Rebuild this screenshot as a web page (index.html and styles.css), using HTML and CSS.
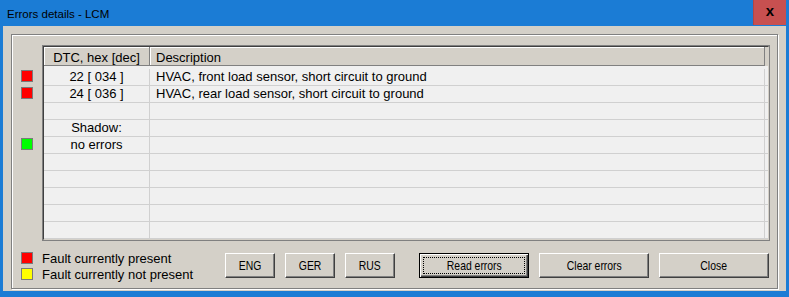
FILE: index.html
```html
<!DOCTYPE html>
<html lang="en">
<head>
  <meta charset="UTF-8">
  <title>Errors details - LCM</title>
  <link rel="stylesheet" href="styles.css">
</head>
<body>

  <div class="window">
    <!-- Title bar -->
    <div class="titlebar">
      <span class="title">Errors details - LCM</span>
      <div class="close-x">x</div>
    </div>

    <div class="client">
      <div class="group">

        <!-- Markers + error grid -->
        <div class="table-area">
          <div class="markers">
            <div class="mark-cell"><span class="led red"></span></div>
            <div class="mark-cell"><span class="led red"></span></div>
            <div class="mark-cell"></div>
            <div class="mark-cell"></div>
            <div class="mark-cell"><span class="led green"></span></div>
            <div class="mark-cell"></div>
            <div class="mark-cell"></div>
            <div class="mark-cell"></div>
            <div class="mark-cell"></div>
            <div class="mark-cell"></div>
          </div>

          <div class="grid">
            <div class="grid-inner">
              <div class="grid-head">
                <div class="hcell c1">DTC, hex [dec]</div>
                <div class="hcell c2">Description</div>
              </div>
              <div class="grid-body">
                <div class="row"><div class="cell c1">22 [ 034 ]</div><div class="cell c2">HVAC, front load sensor, short circuit to ground</div></div>
                <div class="row"><div class="cell c1">24 [ 036 ]</div><div class="cell c2">HVAC, rear load sensor, short circuit to ground</div></div>
                <div class="row"><div class="cell c1"></div><div class="cell c2"></div></div>
                <div class="row"><div class="cell c1">Shadow:</div><div class="cell c2"></div></div>
                <div class="row"><div class="cell c1">no errors</div><div class="cell c2"></div></div>
                <div class="row"><div class="cell c1"></div><div class="cell c2"></div></div>
                <div class="row"><div class="cell c1"></div><div class="cell c2"></div></div>
                <div class="row"><div class="cell c1"></div><div class="cell c2"></div></div>
                <div class="row"><div class="cell c1"></div><div class="cell c2"></div></div>
                <div class="row"><div class="cell c1"></div><div class="cell c2"></div></div>
              </div>
            </div>
          </div>
        </div>

        <!-- Legend + buttons -->
        <div class="footer">
          <div class="legend">
            <div class="legend-item"><span class="led red"></span>Fault currently present</div>
            <div class="legend-item"><span class="led yellow"></span>Fault currently not present</div>
          </div>
          <div class="lang">
            <button class="btn small"><span class="label">ENG</span></button>
            <button class="btn small"><span class="label">GER</span></button>
            <button class="btn small"><span class="label">RUS</span></button>
          </div>
          <div class="actions">
            <button class="btn wide default"><span class="label">Read errors</span></button>
            <button class="btn wide"><span class="label">Clear errors</span></button>
            <button class="btn wide"><span class="label">Close</span></button>
          </div>
        </div>

      </div>
    </div>
  </div>

</body>
</html>
```

FILE: styles.css
```css
/* General */
body {
  margin: 0;
  font-family: "Liberation Sans", Arial, sans-serif;
  font-size: 13px;
  color: #000;
}

/* Window frame */
.window {
  width: 789px;
  height: 297px;
  box-sizing: border-box;
  padding: 0 3px 6px 3px;
  background-color: #1b7cd5;
  display: flex;
  flex-direction: column;
}

.titlebar {
  height: 26px;
  display: flex;
  justify-content: space-between;
  align-items: flex-start;
}

.title {
  font-size: 11.5px;
  line-height: 13px;
  padding: 8px 0 0 4px;
}

.close-x {
  width: 33px;
  height: 25px;
  box-sizing: border-box;
  background-color: #c75050;
  border-left: 1px solid #b24545;
  font-size: 15px;
  font-weight: bold;
  line-height: 22px;
  text-align: center;
}

.client {
  flex: 1;
  background-color: #d4d0c8;
  display: flex;
  flex-direction: column;
}

/* Etched group box */
.group {
  flex: 1;
  margin: 8px 8px 2px 8px;
  padding: 10px 7px 0 0;
  border: 1px solid #808080;
  box-shadow: inset 1px 1px 0 #fff, 1px 1px 0 #fff;
  display: flex;
  flex-direction: column;
}

.table-area {
  display: flex;
}

/* Status squares */
.markers {
  width: 30px;
  flex: none;
  padding-top: 24px;
  box-sizing: border-box;
}

.mark-cell {
  height: 17px;
  padding: 1px 0 0 9px;
  box-sizing: border-box;
}

.led {
  display: block;
  width: 12px;
  height: 12px;
  box-sizing: border-box;
  border: 1px solid #7a7a7a;
}

.led.red { background-color: #ff0000; }
.led.green { background-color: #00ff00; }
.led.yellow { background-color: #ffff00; }

/* Grid */
.grid {
  flex: 1;
  border: 1px solid #808080;
}

.grid-inner {
  border: 1px solid #404040;
  border-right-color: #d4d0c8;
  border-bottom-color: #d4d0c8;
  background-color: #f0f0f0;
}

.grid-head {
  display: flex;
  height: 19px;
  background-color: #d4d0c8;
}

.hcell {
  height: 19px;
  box-sizing: border-box;
  padding-top: 2px;
  line-height: 17px;
  border-right: 1px solid #808080;
  border-bottom: 1px solid #808080;
  box-shadow: inset 1px 1px 0 #fff;
  white-space: nowrap;
}

.hcell.c1 { width: 106px; text-align: center; }
.hcell.c2 { width: 615px; padding-left: 6px; }

.grid-body {
  padding-top: 3px;
}

.row {
  display: flex;
  height: 17px;
  box-sizing: border-box;
  border-bottom: 1px solid #d0d0d0;
}

.cell {
  line-height: 16px;
  box-sizing: border-box;
  border-right: 1px solid #d0d0d0;
  white-space: nowrap;
}

.cell.c1 { width: 106px; text-align: center; }
.cell.c2 { width: 615px; padding-left: 6px; }

/* Footer */
.footer {
  display: flex;
  margin-top: 9px;
  height: 32px;
}

.legend {
  width: 213px;
  padding-left: 9px;
  box-sizing: border-box;
}

.legend-item {
  display: flex;
  align-items: center;
  gap: 9px;
  height: 16px;
}

.lang,
.actions {
  display: flex;
  gap: 10px;
}

.actions {
  margin-left: 24px;
}

/* Classic 3D buttons */
.btn {
  height: 25px;
  margin-top: 3px;
  padding: 0;
  background-color: #d4d0c8;
  border: 1px solid;
  border-color: #fff #404040 #404040 #fff;
  box-shadow: inset -1px -1px 0 #808080;
  font-family: "Liberation Sans", Arial, sans-serif;
  font-size: 13px;
  color: #000;
}

/* button captions use a narrow face */
.btn .label {
  display: inline-block;
  transform: scaleX(0.8);
  white-space: nowrap;
}

.btn.small { width: 50px; }
.btn.wide { width: 110px; }

.btn.default {
  border-color: #000;
  box-shadow: inset 1px 1px 0 #fff, inset -1px -1px 0 #404040, inset -2px -2px 0 #808080;
  outline: 1px dotted #000;
  outline-offset: -5px;
}
```
